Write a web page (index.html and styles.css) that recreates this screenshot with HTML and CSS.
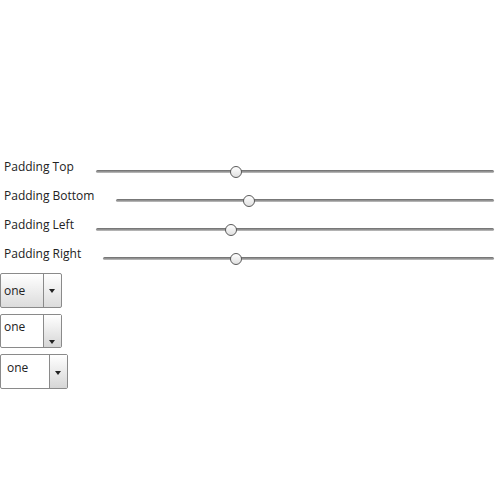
FILE: index.html
```html
<!DOCTYPE html>
<html lang="en">

<head>
    <meta charset="UTF-8">
    <title>Padding Controls</title>
    <link rel="stylesheet" href="styles.css">
</head>

<body>
    <div class="main">
        <div class="sliders">
            <div class="row">
                <span class="label">Padding Top</span>
                <div class="track"><span class="thumb" style="left: 35.1%"></span></div>
            </div>
            <div class="row">
                <span class="label">Padding Bottom</span>
                <div class="track"><span class="thumb" style="left: 35.2%"></span></div>
            </div>
            <div class="row">
                <span class="label">Padding Left</span>
                <div class="track"><span class="thumb" style="left: 34%"></span></div>
            </div>
            <div class="row">
                <span class="label">Padding Right</span>
                <div class="track"><span class="thumb" style="left: 34%"></span></div>
            </div>
        </div>

        <div class="selects">
            <div class="combo combo_flat">
                <span class="value">one</span>
                <span class="arrow"></span>
            </div>
            <div class="combo combo_top">
                <span class="value">one</span>
                <span class="arrow"></span>
            </div>
            <div class="combo combo_wide">
                <span class="value">one</span>
                <span class="arrow"></span>
            </div>
        </div>
    </div>
</body>

</html>
```

FILE: styles.css
```css
html,
body {
    margin: 0;
    padding: 0;
}

body {
    font-family: "Open Sans", "Noto Sans", sans-serif;
    font-size: 12px;
    color: #222;
}

.main {
    padding-top: 157px;
}

.row {
    display: flex;
    align-items: center;
    height: 29px;
    padding: 0 6px 0 4px;
}

.row .label {
    margin-right: 22px;
    margin-top: -10px;
    white-space: nowrap;
}

.track {
    flex: 1;
    height: 3px;
    position: relative;
    border-radius: 2px;
    background: linear-gradient(#6a6a6a, #9a9a9a 60%, #c4c4c4);
}

.thumb {
    position: absolute;
    top: -4px;
    width: 10px;
    height: 10px;
    margin-left: -6px;
    border: 1px solid #5a5a5a;
    border-radius: 50%;
    background: linear-gradient(#ffffff, #e0e0e0);
}

.selects {
    display: flex;
    flex-direction: column;
    align-items: flex-start;
    gap: 6px;
}

.combo {
    display: flex;
    box-sizing: border-box;
    border: 1px solid #8a8a8a;
    border-radius: 2px;
    background: #fff;
}

.combo .value {
    flex: 1;
}

.combo .arrow {
    position: relative;
    width: 17px;
    border-left: 1px solid #8a8a8a;
    background: linear-gradient(#ffffff, #d6d6d6);
}

.combo .arrow::after {
    content: "";
    position: absolute;
    left: 5px;
    border-left: 3px solid transparent;
    border-right: 3px solid transparent;
    border-top: 4px solid #222;
}

.combo_flat {
    width: 62px;
    height: 35px;
    align-items: center;
    background: linear-gradient(#ffffff, #dcdcdc);
}

.combo_flat .value {
    padding-left: 3px;
    line-height: 33px;
}

.combo_flat .arrow {
    align-self: stretch;
    background: none;
}

.combo_flat .arrow::after {
    top: 15px;
}

.combo_top {
    width: 62px;
    height: 34px;
}

.combo_top .value {
    padding: 3px 0 0 3px;
}

.combo_top .arrow::after {
    top: 25px;
}

.combo_wide {
    width: 68px;
    height: 35px;
}

.combo_wide .value {
    padding: 4px 0 0 6px;
}

.combo_wide .arrow::after {
    top: 16px;
}
```
